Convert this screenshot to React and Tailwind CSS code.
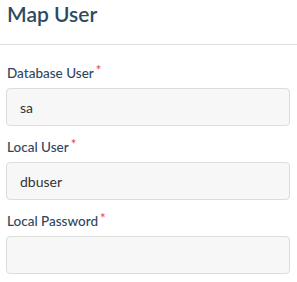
import React from 'react';

// Single labelled input row
const Field = ({ label, value, first }) => {
  return (
    <div className={first ? '' : 'mt-[13px]'}>
      <label className="flex items-start text-[13.5px] leading-[16px] font-medium text-[#2f4760] pl-[7px]">
        {label}
        <span className="text-[#e5465c] text-[13px] leading-[10px] ml-[2px]">*</span>
      </label>
      <input
        readOnly
        value={value}
        className="mt-[7px] block w-[284px] ml-[6px] h-[38px] px-[13px] text-[14px] text-[#333] bg-[#f7f7f7] border border-[#dcdcdc] rounded-[4px] outline-none"
      />
    </div>
  );
};

const App = () => {
  return (
    <div className="w-[297px] h-[282px] bg-white" style={{ fontFamily: 'Lato, "Open Sans", sans-serif' }}>
      <div className="h-[45px] border-b border-[#dddddd] pt-px pl-[7px]">
        <h1 className="text-[21px] leading-[25px] font-semibold text-[#2e4a62]">Map User</h1>
      </div>
      <div className="pt-[20px]">
        <Field label="Database User" value="sa" first />
        <Field label="Local User" value="dbuser" />
        <Field label="Local Password" value="" />
      </div>
    </div>
  );
};

export default App;
